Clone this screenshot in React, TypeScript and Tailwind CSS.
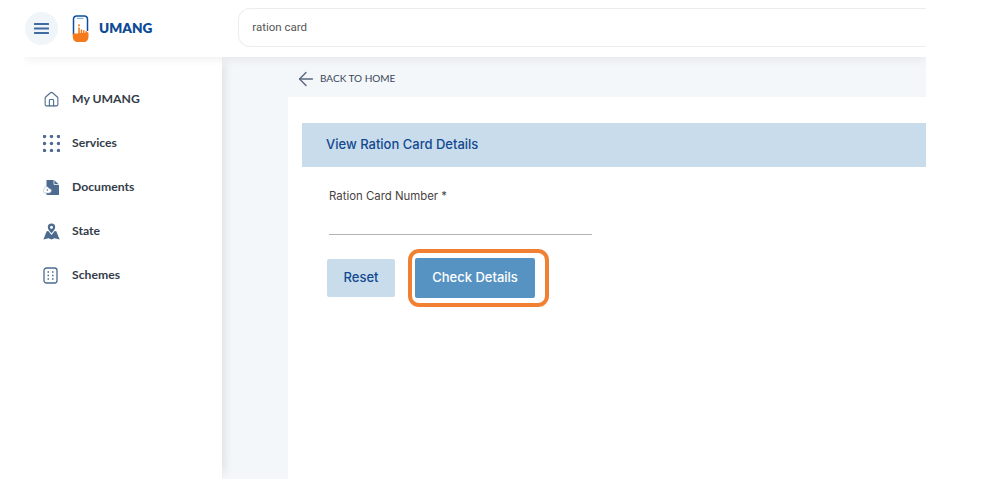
import { ArrowLeft, Home } from "lucide-react";
import type { ReactNode } from "react";

const MenuBars = () => (
  <svg width="15" height="11" viewBox="0 0 15 11" fill="#3f6ba3">
    <rect y="0" width="15" height="2" rx="0.500" />
    <rect y="4.500" width="15" height="2" rx="0.500" />
    <rect y="9" width="15" height="2" rx="0.500" />
  </svg>
);

const GridIcon = () => (
  <svg width="17" height="17" viewBox="0 0 17 17" fill="#4d6a8f">
    {[1.5, 8.5, 15.5].map((y) =>
      [1.5, 8.5, 15.5].map((x) => <circle key={`${x}-${y}`} cx={x} cy={y} r="1.7" />),
    )}
  </svg>
);

const DocIcon = () => (
  <svg width="17" height="17" viewBox="0 0 17 17">
    <path d="M3.500 1h7.500l5 4.500V16H3.500z" fill="#4d6a8f" />
    <path d="M11 1v4.500h5" fill="none" stroke="#fff" strokeWidth="0.8" />
    <path d="M3 7.500c1.500 0 2.500 1 3 2 1.500 0 2.300 1 2.300 2.200S7.300 14 6 14H2.300C1 14 .3 13 .3 11.800s.8-1.900 1.400-2.100C1.800 8.500 2.300 7.500 3 7.500z" fill="#fff" stroke="#a3b2c4" strokeWidth="0.6" />
    <path d="M4.300 10v2" stroke="#4d6a8f" strokeWidth="0.8" />
  </svg>
);

const StateIcon = () => (
  <svg width="17" height="17" viewBox="0 0 17 17" fill="#4d6a8f">
    <path fillRule="evenodd" d="M8.500 .5a3.700 3.700 0 0 1 3.700 3.700c0 2.300-2.400 4.600-3.700 6.100-1.300-1.500-3.700-3.800-3.700-6.100A3.700 3.700 0 0 1 8.500.5zm0 2.200a1.500 1.500 0 1 0 0 3 1.500 1.500 0 0 0 0-3z" />
    <path d="M3.700 8.200 5.300 8l3.200 4 3.200-4 1.600.2L16.600 16.500 11.500 15.200 8.500 16.500 5.500 15.200.4 16.500z" />
  </svg>
);

const SchemeIcon = () => (
  <svg width="15" height="17" viewBox="0 0 15 17" fill="none" stroke="#4d6a8f">
    <rect x="1" y="1" width="13" height="15" rx="2.500" strokeWidth="1.300" />
    <path d="M4.500 5h1.500M9 5h1.500M4.500 8.500h1.500M9 8.500h1.500M4.500 12h1.500M9 12h1.500" strokeWidth="1.300" />
  </svg>
);

const LogoIcon = () => (
  <svg width="18" height="28" viewBox="0 0 18 28">
    <path d="M1.500 20V4a3 3 0 0 1 3-3h8a3 3 0 0 1 3 3v12" fill="none" stroke="#0d4f9e" strokeWidth="1.500" />
    <rect x="5" y="2.800" width="6.500" height="1.300" fill="#8fb0d6" />
    <circle cx="7" cy="10.300" r="1" fill="#f47a1c" />
    <path d="M6.200 12.500h1.600v5.500h.9v-3.500h1.500v3.500h.8v-2.700h1.500v2.700h.8v-1.800h1.400l1.800 2v3.500c0 3-2 5.300-4.500 5.300H6c-3 0-5.200-2-5.200-5.300v-3.200h5.400z" fill="#f47a1c" />
  </svg>
);

const navItems: Array<{ label: string; icon: ReactNode }> = [
  { label: "My UMANG", icon: <Home size={17} strokeWidth={1.500} color="#4d6a8f" /> },
  { label: "Services", icon: <GridIcon /> },
  { label: "Documents", icon: <DocIcon /> },
  { label: "State", icon: <StateIcon /> },
  { label: "Schemes", icon: <SchemeIcon /> },
];

const App = () => {
  return (
    <div className="h-[485px] w-[1005px] overflow-hidden bg-white font-['Inter',sans-serif]">
      <div className="flex h-[479px] w-[926px] overflow-hidden pl-6">
        <div className="flex min-w-0 flex-1 flex-col overflow-hidden">
          <header className="relative z-20 flex h-[57px] shrink-0 items-center bg-white shadow-[0_2px_10px_rgba(0,0,0,0.07)]">
            <button className="ml-px flex h-[33px] w-[33px] items-center justify-center rounded-full bg-[#eff5f9]">
              <MenuBars />
            </button>
            <div className="ml-[14px] pt-[1px]">
              <LogoIcon />
            </div>
            <span className="ml-[9px] font-['Lato',sans-serif] text-[13.600px] font-extrabold text-[#0d4a97]">
              UMANG
            </span>
            <div className="mb-[2px] ml-[86px] flex h-[39px] flex-1 items-center rounded-l-xl border-y border-l border-[#ededed] pl-[13px] font-['Roboto',sans-serif] text-[11.500px] text-[#555]">
              ration card
            </div>
          </header>

          <div className="flex min-h-0 flex-1">
            <nav className="relative z-10 flex w-[198px] shrink-0 flex-col gap-[27px] bg-white pl-[19px] pt-[34px] shadow-[8px_0_10px_-6px_rgba(0,0,0,0.1)]">
              {navItems.map((item) => (
                <div key={item.label} className="flex h-[17px] items-center">
                  <span className="flex w-[29px] shrink-0 justify-start">{item.icon}</span>
                  <span className="font-['Lato',sans-serif] text-[12.200px] font-bold text-[#333c48]">{item.label}</span>
                </div>
              ))}
            </nav>

            <main className="flex min-w-0 flex-1 flex-col bg-[#f3f7fa] pl-[66px]">
              <div className="flex h-[40px] shrink-0 items-center pl-[7px] pt-[3px] font-['Lato',sans-serif] text-[10px] text-[#3a4658]">
                <ArrowLeft size={22} strokeWidth={1.500} color="#5a6780" />
                <span className="ml-[3px]">BACK TO HOME</span>
              </div>

              <section className="flex-1 bg-white pl-[14px] pt-[26px]">
                <h2 className="flex h-[44px] items-center bg-[#c9dcec] pl-[24px] text-[13px] font-medium text-[#12498f]">
                  View Ration Card Details
                </h2>

                <div className="pl-[25px] pt-[22px]">
                  <label className="ml-[2px] block text-[11.400px] leading-[14px] text-[#4a3f42]">Ration Card Number *</label>
                  <div className="ml-[2px] mt-[31px] w-[263px] border-b border-[#b3b3b3]" />

                  <div className="mt-[23px] flex items-center">
                    <button className="h-[38px] w-[68px] rounded-[2px] bg-[#c9dcec] text-[13px] font-medium text-[#12498f]">
                      Reset
                    </button>
                    <div className="relative ml-[20px]">
                      <button className="block h-[40px] w-[120px] rounded-[2px] bg-[#5793c2] text-[13px] font-medium text-white">
                        Check Details
                      </button>
                      <div className="absolute -top-[9px] -right-[14px] -bottom-[9px] -left-[7px] rounded-[11px] border-[4.500px] border-[#f28033]" />
                    </div>
                  </div>
                </div>
              </section>
            </main>
          </div>
        </div>
      </div>
    </div>
  );
};

export default App;
